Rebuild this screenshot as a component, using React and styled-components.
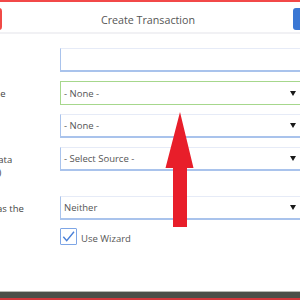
import React from "react";
import styled, { createGlobalStyle } from "styled-components";

const GlobalStyle = createGlobalStyle`
  html, body {
    margin: 0;
    padding: 0;
    background: #fff;
    overflow: hidden;
  }
  body {
    font-family: "Open Sans", "DejaVu Sans", sans-serif;
  }
`;

const fields = [
  { label: ["Name"], kind: "text" },
  { label: ["Transaction Type"], kind: "select", value: "- None -", focus: true },
  { label: ["Currency"], kind: "select", value: "- None -" },
  { label: ["Source of the Data", "(when available)"], kind: "select", value: "- Select Source -" },
  { label: ["Count transfer as the"], kind: "select", value: "Neither" },
];

export default function App() {
  return (
    <>
      <GlobalStyle />
      <Screen>
        <TopBar />
        <Dialog>
          <Header>
            <CancelButton>Cancel</CancelButton>
            <Title>Create Transaction</Title>
            <SaveButton>Save</SaveButton>
          </Header>
          <Form>
            {fields.map((f, i) => (
              <FieldRow key={i}>
                <Label $lines={f.label.length}>
                  {f.label.map((line, j) => (
                    <div key={j}>{line}</div>
                  ))}
                </Label>
                {f.kind === "text" ? (
                  <TextBox />
                ) : (
                  <SelectBox $focus={f.focus}>
                    <span>{f.value}</span>
                    <Caret />
                  </SelectBox>
                )}
              </FieldRow>
            ))}
            <CheckRow>
              <CheckBox>
                <svg width="17" height="17" viewBox="0 0 17 17">
                  <path
                    d="M3.3 8.7 L6.7 12.6 L14 3.7"
                    fill="none"
                    stroke="#4a80d8"
                    strokeWidth="1.4"
                  />
                </svg>
              </CheckBox>
              <CheckText>Use Wizard</CheckText>
            </CheckRow>
          </Form>
        </Dialog>
        <Footer />
        <Pointer width="30" height="118" viewBox="0 0 30 118">
          <polygon
            points="15,1 28.5,57 22,57 22,116 8,116 8,57 0.5,57"
            fill="#e81e2a"
          />
        </Pointer>
      </Screen>
    </>
  );
}

const Screen = styled.div`
  position: relative;
  width: 300px;
  height: 300px;
  overflow: hidden;
  display: flex;
  flex-direction: column;
  background: #fff;
`;

const TopBar = styled.div`
  height: 2px;
  background: #f24848;
  flex-shrink: 0;
`;

const Dialog = styled.div`
  flex: 1;
  margin-left: -80px;
  width: 456px;
  display: flex;
  flex-direction: column;
`;

const Header = styled.div`
  display: grid;
  grid-template-columns: 1fr auto 1fr;
  align-items: center;
  padding: 6px 10px 2px;
  border-bottom: 2px solid #f1f1f4;
`;

const HeadButton = styled.div`
  height: 22px;
  border-radius: 3px;
  color: #fff;
  font-size: 11px;
  display: flex;
  align-items: center;
  justify-content: center;
  box-sizing: border-box;
`;

const CancelButton = styled(HeadButton)`
  justify-self: start;
  width: 72px;
  padding-right: 24px;
  background: #f04a46;
`;

const SaveButton = styled(HeadButton)`
  justify-self: end;
  width: 73px;
  padding-left: 24px;
  background: #3a77d4;
`;

const Title = styled.div`
  font-size: 10.7px;
  color: #555;
  padding-top: 2px;
`;

const Form = styled.div`
  padding: 14px 0 0 10px;
  display: flex;
  flex-direction: column;
`;

const FieldRow = styled.div`
  display: grid;
  grid-template-columns: 130px 242px;
  margin-bottom: 9px;
`;

const Label = styled.div`
  font-size: 9.5px;
  line-height: 13px;
  color: #444;
  white-space: nowrap;
  padding-top: 6px;
  padding-bottom: ${(p) => (p.$lines > 1 ? 8 : 0)}px;
`;

const Box = styled.div`
  box-sizing: border-box;
  height: 24px;
  border: 1px solid #e6ebf7;
  border-left-color: #a9c3ec;
  border-bottom: 2px solid #a9c3ec;
  background: #fff;
`;

const TextBox = styled(Box)``;

const SelectBox = styled(Box)`
  display: flex;
  align-items: center;
  justify-content: space-between;
  padding: 0 5px 0 3px;
  font-size: 9.5px;
  color: #555;
  ${(p) =>
    p.$focus &&
    `
    border: 1px solid #a6d78c;
  `}
`;

const Caret = styled.span`
  width: 0;
  height: 0;
  border-left: 3.5px solid transparent;
  border-right: 3.5px solid transparent;
  border-top: 5px solid #1a1a1a;
`;

const CheckRow = styled.div`
  display: flex;
  align-items: center;
  gap: 4px;
  margin-left: 130px;
  margin-top: -1px;
`;

const CheckBox = styled.div`
  box-sizing: border-box;
  width: 17px;
  height: 17px;
  border: 1.5px solid #7ea6e6;
  border-radius: 1px;
  display: flex;
  align-items: center;
  justify-content: center;
  svg {
    margin: -1.5px;
  }
`;

const CheckText = styled.span`
  font-size: 9.5px;
  color: #555;
  padding-top: 3px;
`;

const Footer = styled.div`
  flex-shrink: 0;
  height: 6px;
  border-top: 1px solid #b5b8b3;
  border-bottom: 2px solid #d0383c;
  background: #4b5049;
`;

const Pointer = styled.svg`
  position: absolute;
  left: 165px;
  top: 111px;
`;
